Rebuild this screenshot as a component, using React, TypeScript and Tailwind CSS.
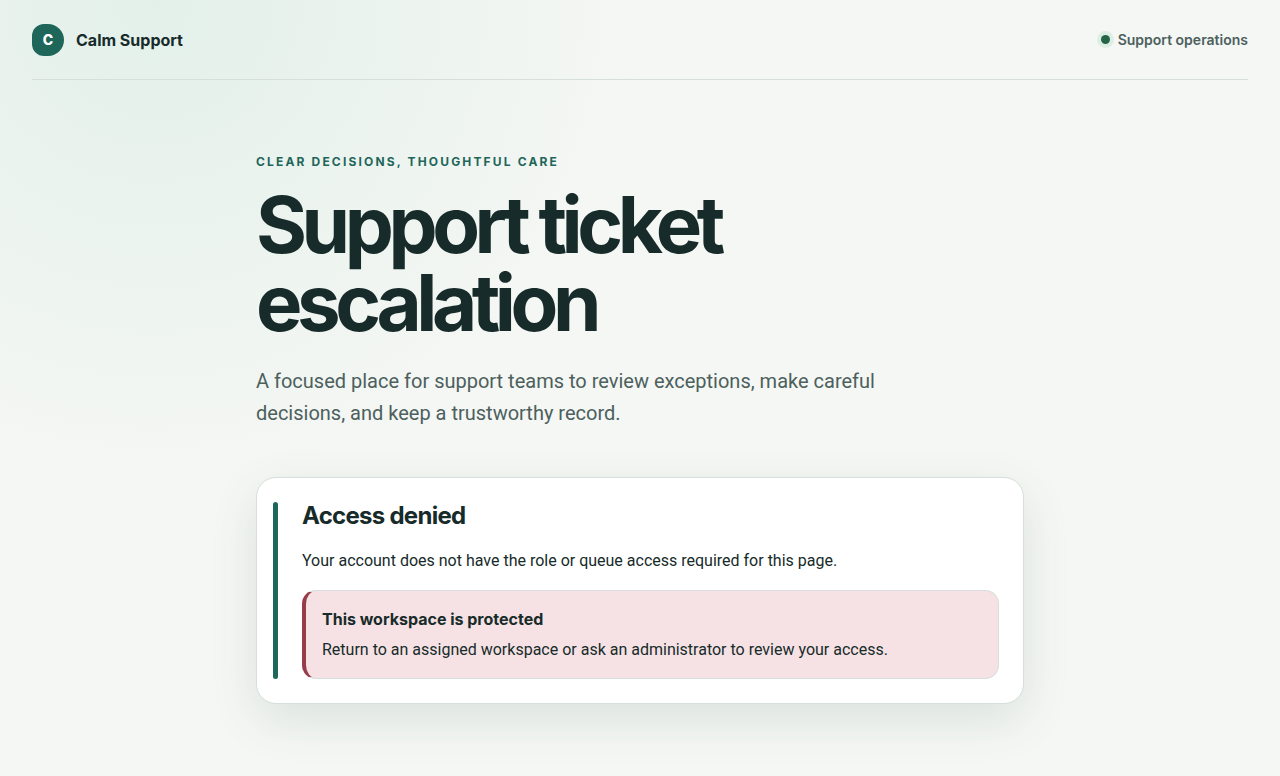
export default function App() {
  return (
    <div className="min-h-screen bg-[#f5f7f4] bg-[radial-gradient(circle_at_12%_0%,#e3f0ea_0,transparent_31rem)] font-['Inter',sans-serif] text-base text-[#172b2a]">
      <header className="mx-8 flex h-20 items-center justify-between border-b border-[#d6dfdb]">
        <a href="#" className="flex items-center gap-3 font-bold">
          <span className="grid size-8 place-items-center rounded-[12px_16px_16px_12px] bg-[#1f665a] text-sm font-extrabold text-white">C</span>
          Calm Support
        </a>
        <p className="flex items-center gap-2 text-sm font-semibold text-[#4c605d]">
          <span className="size-[9px] rounded-full bg-[#246447] ring-4 ring-[#dfeee5]" />
          Support operations
        </p>
      </header>
      <main className="mx-auto max-w-3xl pt-18 pb-18">
        <p className="mb-[14px] text-xs leading-5 font-bold tracking-[0.18em] text-[#1f665a] uppercase">Clear decisions, thoughtful care</p>
        <h1 className="max-w-2xl text-[78px] leading-none font-bold tracking-[-0.07em]">Support ticket escalation</h1>
        <p className="mt-[23px] max-w-[640px] font-['Roboto',sans-serif] text-xl leading-8 text-[#4c605d]">
          A focused place for support teams to review exceptions, make careful decisions, and keep a trustworthy record.
        </p>
        <section className="mt-12 flex gap-6 rounded-[20px] border border-[#d6dfdb] bg-white py-6 pr-6 pl-4 shadow-[0_16px_48px_rgba(31,80,65,0.12)]">
          <div className="w-[5px] shrink-0 rounded-full bg-[#1f665a]" />
          <div className="min-w-0 flex-1 leading-[26px]">
            <h2 className="text-2xl leading-7 font-bold tracking-[-0.03em]">Access denied</h2>
            <p className="mt-[18px] font-['Roboto',sans-serif]">Your account does not have the role or queue access required for this page.</p>
            <div role="alert" className="mt-4 rounded-[14px] border border-l-4 border-[#d6dfdb] border-l-[#963d49] bg-[#f6e2e4] px-4 py-[15px]">
              <strong className="block font-bold">This workspace is protected</strong>
              <p className="mt-[5px] font-['Roboto',sans-serif]">Return to an assigned workspace or ask an administrator to review your access.</p>
            </div>
          </div>
        </section>
      </main>
    </div>
  );
}
